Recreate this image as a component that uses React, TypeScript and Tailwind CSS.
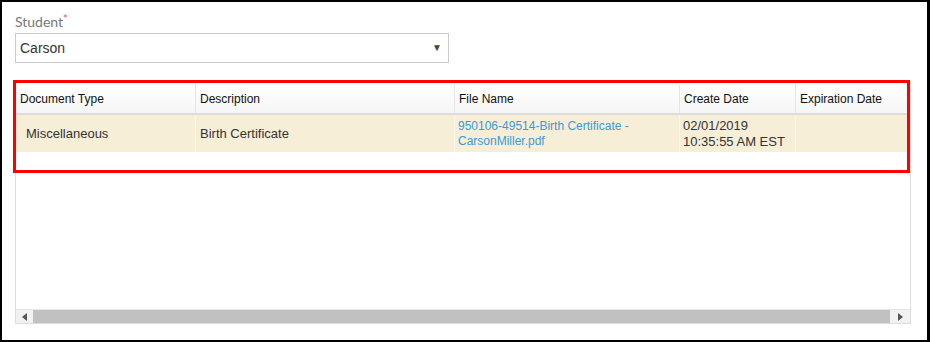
import React from 'react';

interface DocRow {
    docType: string;
    description: string;
    fileName: string[];
    created: string[];
    expires: string;
}

const columns = ['Document Type', 'Description', 'File Name', 'Create Date', 'Expiration Date'];

const rows: DocRow[] = [
    {
        docType: 'Miscellaneous',
        description: 'Birth Certificate',
        fileName: ['950106-49514-Birth Certificate -', 'CarsonMiller.pdf'],
        created: ['02/01/2019', '10:35:55 AM EST'],
        expires: '',
    },
];

const gridCols = 'grid grid-cols-[180px_259px_225px_116px_160px]';

const App: React.FC = () => {
    return (
        <div className="relative w-[930px] h-[342px] border-2 border-r-[3px] border-black bg-white px-[13px] pt-[10px] font-['Liberation_Sans',Arial,sans-serif] overflow-hidden">
            {/* Student picker */}
            <label className="block h-[20px] font-['Lato',sans-serif] text-[14px] leading-[20px] text-[#777]">
                Student<span className="text-[#e05a5a] text-[11px] align-top leading-[14px]">*</span>
            </label>
            <div className="mt-[1px] w-[434px] h-[30px] border border-[#ccc] flex items-center justify-between pl-[4px] pr-[6px]">
                <span className="text-[14px] text-[#333]">Carson</span>
                <span className="text-[10px] text-[#444] leading-none">▼</span>
            </div>

            {/* Documents grid */}
            <div className="mt-[19px] w-[896px] h-[242px] border border-[#ddd] flex flex-col">
                <div className="flex-1 overflow-hidden">
                    <div className={`${gridCols} h-[32px] pt-[2px] bg-gradient-to-b from-white to-[#f6f6f6] border-b-2 border-[#dcdcdc] text-[12px] text-[#111]`}>
                        {columns.map(col => (
                            <div key={col} className="flex items-center px-[4px] border-r border-[#e6e6e6] whitespace-nowrap">
                                {col}
                            </div>
                        ))}
                    </div>
                    {rows.map((row, i) => (
                        <div key={i} className={`${gridCols} h-[37px] bg-[#f7eed8] text-[13px] text-[#333] leading-[15px]`}>
                            <div className="flex items-center pl-[10px] border-r border-[#fbf7ec]">{row.docType}</div>
                            <div className="flex items-center pl-[4px] border-r border-[#fbf7ec]">{row.description}</div>
                            <div className="flex flex-col justify-center pl-[3px] border-r border-[#fbf7ec] text-[12px] text-[#3a9ad9]">
                                {row.fileName.map(line => <span key={line}>{line}</span>)}
                            </div>
                            <div className="flex flex-col justify-center pl-[3px] border-r border-[#fbf7ec] text-[13px] leading-[16px]">
                                {row.created.map(line => <span key={line}>{line}</span>)}
                            </div>
                            <div className="flex items-center pl-[4px]">{row.expires}</div>
                        </div>
                    ))}
                </div>

                {/* horizontal scrollbar */}
                <div className="h-[14px] flex bg-[#f1f1f1] border-t border-[#e6e6e6]">
                    <div className="w-[17px] flex items-center justify-center">
                        <svg width="5" height="8" viewBox="0 0 5 8"><path d="M5 0L0 4l5 4z" fill="#555" /></svg>
                    </div>
                    <div className="flex-1 bg-[#c1c1c1]" />
                    <div className="w-[20px] flex items-center justify-center">
                        <svg width="5" height="8" viewBox="0 0 5 8"><path d="M0 0l5 4-5 4z" fill="#555" /></svg>
                    </div>
                </div>
            </div>

            {/* highlight box */}
            <div className="absolute left-[11px] top-[78px] w-[897px] h-[93px] border-[3px] border-[#ff0000] pointer-events-none" />
        </div>
    );
};

export default App;
